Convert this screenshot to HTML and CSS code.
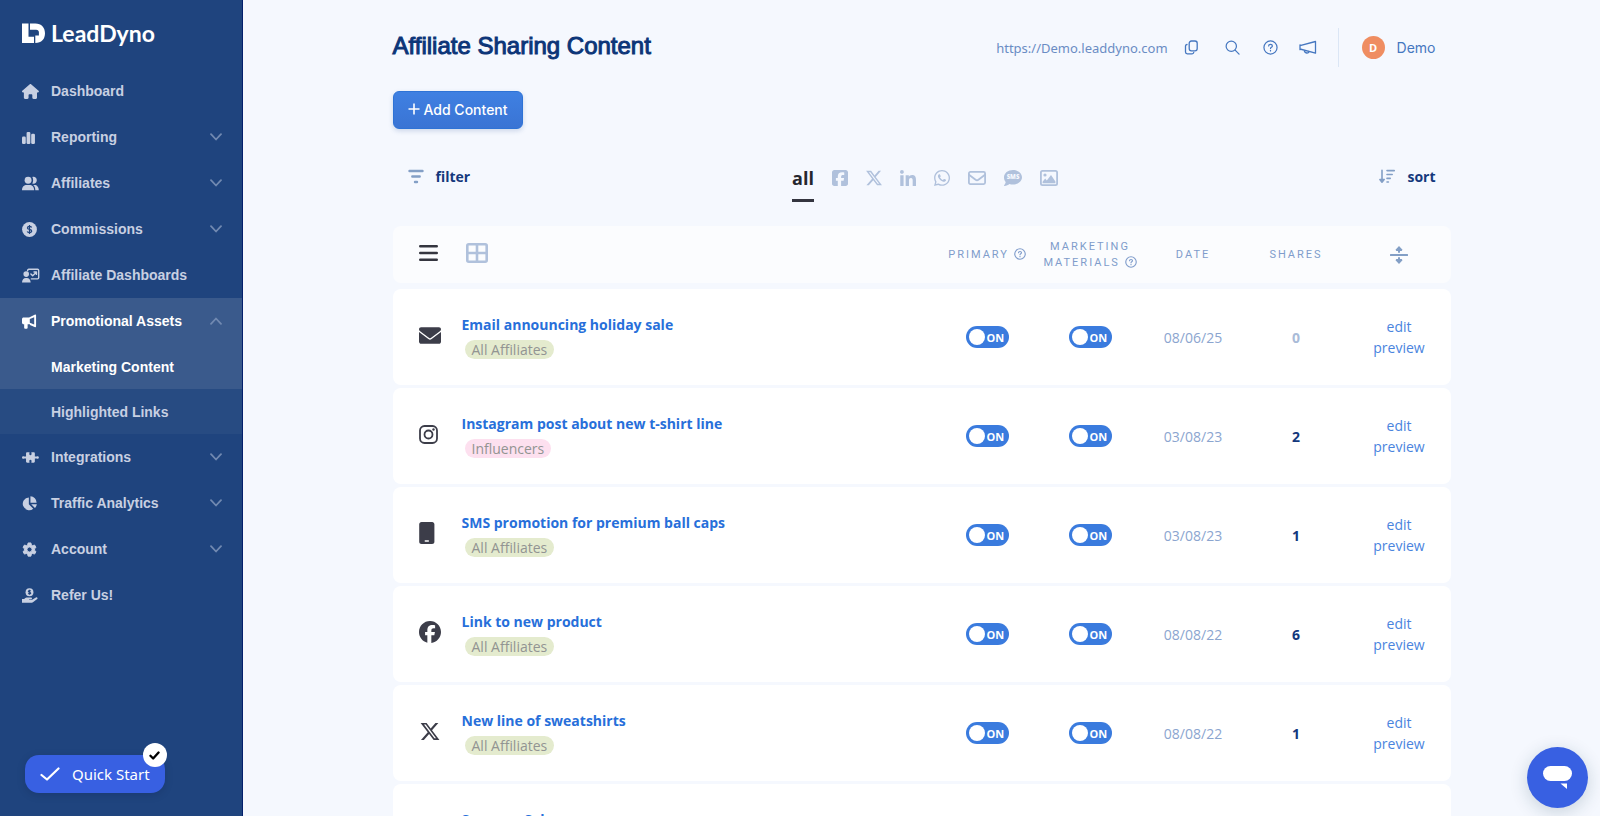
FILE: index.html
```html
<!DOCTYPE html>
<html lang="en">
<head>
<meta charset="utf-8">
<meta name="viewport" content="width=device-width, initial-scale=1">
<title>Affiliate Sharing Content</title>
<link rel="stylesheet" href="styles.css">
</head>
<body>
<svg class="sprite" aria-hidden="true">
  <symbol id="i-home" viewBox="0 0 576 512" preserveAspectRatio="xMinYMid"><path d="M575.8 255.5c0 18-15 32.1-32 32.1h-32l.7 160.2c0 2.7-.2 5.4-.5 8.1V472c0 22.1-17.9 40-40 40H392c-22.1 0-40-17.9-40-40V384c0-17.7-14.3-32-32-32H256c-17.7 0-32 14.3-32 32v88c0 22.1-17.9 40-40 40H104c-22.1 0-40-17.9-40-40V287.600H32c-18 0-32-14-32-32.100c0-9 3-17 10-24L266.400 8c7-7 15-8 22-8s15 2 21 7L564.800 231.500c8 7 12 15 11 24z"/></symbol>
  <symbol id="i-bars" viewBox="0 0 16 16" preserveAspectRatio="xMinYMid"><rect x="0" y="7" width="4" height="8" rx="1.300"/><rect x="4.900" y="2" width="4" height="13" rx="1.300"/><rect x="9.800" y="4" width="4" height="11" rx="1.300"/></symbol>
  <symbol id="i-users" viewBox="0 0 18 16" preserveAspectRatio="xMinYMid"><circle cx="6.500" cy="4.500" r="3.700"/><path d="M0 15.300c0-3.600 2.300-5.600 5-5.600h3c2.700 0 5 2 5 5.600zM11 1.100c2.500-.8 4.800.9 4.800 3.400S13.500 8.800 11 7.900c1.200-1.900 1.200-4.900 0-6.800zM12 9.700h1.600c2.300 0 4.300 2.200 4.300 5.600h-3.700c0-2.400-.7-4.200-2.200-5.600z"/></symbol>
  <symbol id="i-coin" viewBox="0 0 16 16" preserveAspectRatio="xMinYMid"><circle cx="8" cy="8" r="7.900"/><path class="cut" d="M10.300 5.800C9.800 4.900 9 4.700 8 4.700c-1.300 0-2.200.6-2.200 1.600 0 2.300 4.500 1 4.500 3.400 0 1-1 1.600-2.300 1.600-1.100 0-2-.3-2.500-1.200M8 3.300v9.400"/></symbol>
  <symbol id="i-teach" viewBox="0 0 19 16" preserveAspectRatio="xMinYMid"><circle cx="4.500" cy="6.500" r="3"/><path d="M0 15.500c0-3 1.700-4.900 4-4.900h1.200c2.300 0 4 1.900 4 4.900z"/><path class="ln" d="M6 3V2.600C6 1.900 6.500 1.400 7.200 1.400h9.400c.7 0 1.200.5 1.200 1.200v7.800c0 .7-.5 1.200-1.200 1.200H10M9.500 6.300l1.900 2 3.800-3.700M12.800 4.200h2.600v2.600"/></symbol>
  <symbol id="i-horn" viewBox="0 0 16 16" preserveAspectRatio="xMinYMid"><path fill-rule="evenodd" d="M14 .6c.5-.2 1 .1 1 .7v12c0 .6-.5.900-1 .7L8.500 11.800V11H6v3.600c0 .6-.4 1-1 1H3.300c-.6 0-1-.4-1-1V11H1.700C.8 11 0 10.300 0 9.400V5.300c0-.9.8-1.600 1.700-1.600H7.500zM13 3.400 8.300 5.400v4l4.700 1.900z"/></symbol>
  <symbol id="i-puzzle" viewBox="0 0 18 16" preserveAspectRatio="xMinYMid"><path d="M2.300 7h2V3.700c0-.7.500-1.200 1.200-1.200h2.200c.4 0 .5.400.3.800-.6 1.100 0 2.200 1 2.200s1.600-1.100 1-2.200c-.2-.4-.1-.8.3-.8h2.200c.7 0 1.200.5 1.200 1.200V7h2c.4-.7 2.300-.6 2.300 1s-1.900 1.700-2.300 1h-2v3.300c0 .7-.5 1.200-1.200 1.200h-2.200c-.4 0-.5-.4-.3-.8.6-1.100 0-2.200-1-2.200s-1.600 1.100-1 2.200c.2.400.1.800-.3.800H5.500c-.7 0-1.200-.5-1.200-1.200V9h-2C1.900 9.700 0 9.600 0 8s1.900-1.700 2.300-1z"/></symbol>
  <symbol id="i-pie" viewBox="0 0 16 16" preserveAspectRatio="xMinYMid"><path d="M7.300 1.500V8.700l4.700 4.800A6.800 6.800 0 1 1 7.300 1.500zM9 .3a6.900 6.900 0 0 1 6.600 6.900H9zM9.800 8.800h6c-.2 1.600-.9 3-2 4.100z"/></symbol>
  <symbol id="i-gear" viewBox="0 0 16 16" preserveAspectRatio="xMinYMid"><path fill-rule="evenodd" stroke="currentColor" stroke-linejoin="round" d="M6.500 1h3l.5 2.100 1.400.8 2-.7 1.500 2.600-1.500 1.400v1.700l1.500 1.400-1.500 2.600-2-.7-1.400.8-.5 2.100h-3L6 13l-1.400-.8-2 .7-1.500-2.600 1.500-1.400V7.200L1.100 5.800l1.500-2.600 2 .7L6 3.100zM8 5.300a2.700 2.700 0 1 0 0 5.400 2.700 2.700 0 0 0 0-5.400z"/></symbol>
  <symbol id="i-hand" viewBox="0 0 17 16" preserveAspectRatio="xMinYMid"><circle cx="8" cy="4.500" r="4.200"/><path d="M0 11.600h2.300c1.200-1 2.300-1.400 3.400-1.400h4c1.400 0 1.300 1.800 0 1.800H7.500v.6h3.300l4-2.500c1.300-.8 2.500.8 1.400 1.700L12 15c-.5.4-1 .6-1.700.6H0z"/><path class="cut" d="M9.300 3.300C8.800 2.700 6.800 2.600 6.800 3.700S9.400 4.600 9.300 5.600 7.200 6.300 6.700 5.700M8 1.900v5.200"/></symbol>
  <symbol id="i-down" viewBox="0 0 12 8"><path class="ln" d="M1 1.200l5 5.300 5-5.300"/></symbol>
  <symbol id="i-check" viewBox="0 0 20 14"><path class="ln" d="M1.500 8l5.500 4.500L18.500 1.500"/></symbol>
  <symbol id="i-tick" viewBox="0 0 12 10"><path class="ln" d="M1.500 5.300l3 3L10.500 1.700"/></symbol>
  <symbol id="i-copy" viewBox="0 0 14 15"><rect class="ln" x="4.700" y="1" width="8" height="9.800" rx="2.200"/><path class="ln" d="M2.500 4.500C1.500 4.600 1 5.200 1 6v6c0 1.100.8 1.800 1.800 1.800h4.800c1 0 1.600-.6 1.700-1.500"/></symbol>
  <symbol id="i-search" viewBox="0 0 16 16"><circle class="ln" cx="6.700" cy="6.700" r="5.500"/><path class="ln" d="M10.800 10.800 15 15"/></symbol>
  <symbol id="i-help" viewBox="0 0 16 16"><circle class="ln" cx="8" cy="8" r="7"/><path class="ln" d="M6 6.400C6 5.200 6.900 4.600 8 4.600s2 .6 2 1.700c0 1.400-2 1.400-2 2.700M8 11v.6"/></symbol>
  <symbol id="i-mega" viewBox="0 0 18 14"><path class="ln" d="M1 4.300v4.900M1 5.200 16.500 1v11.700L1 8.500M16.500 1v11.700M5.300 9.800c0 3.300 4.700 3.600 4.700.9"/></symbol>
  <symbol id="i-filter" viewBox="0 0 16 15"><path class="ln" d="M1.500 2h13M4.300 7.500h7.400M7 13h2"/></symbol>
  <symbol id="i-sort" viewBox="0 0 16 15"><path class="ln" d="M3 1.200v11M.9 10.500 3 13.200l2.100-2.700zM8 1.600h7.300M8 5.500h5.200M8 9.400h3.200M8 13h1.400"/></symbol>
  <symbol id="i-fbsq" viewBox="0 32 448 448"><path d="M64 32C28.700 32 0 60.700 0 96V416c0 35.300 28.700 64 64 64h98.200V334.200H109.400V256h52.800V222.300c0-87.100 39.400-127.500 125-127.500c16.200 0 44.200 3.200 55.700 6.400V172c-6-.6-16.500-1-29.600-1c-42 0-58.200 15.900-58.200 57.200V256h83.600l-14.400 78.200H255V480H384c35.300 0 64-28.700 64-64V96c0-35.300-28.700-64-64-64H64z"/></symbol>
  <symbol id="i-x" viewBox="24 24 464 464"><path d="M389.200 48h70.600L305.600 224.200 487 464H345L233.700 318.600 106.500 464H35.800L200.700 275.500 26.800 48H172.400L272.900 180.900 389.200 48zM364.400 421.800h39.100L151.100 88h-42L364.400 421.800z"/></symbol>
  <symbol id="i-in" viewBox="0 0 448 448"><path d="M100.280 448H7.400V148.900h92.880zM53.790 108.100C24.090 108.100 0 83.500 0 53.800a53.790 53.790 0 0 1 107.580 0c0 29.700-24.100 54.300-53.790 54.300zM447.900 448h-92.680V302.400c0-34.700-.7-79.200-48.290-79.200-48.290 0-55.690 37.700-55.690 76.700V448h-92.780V148.900h89.080v40.800h1.300c12.400-23.500 42.690-48.300 87.880-48.300 94 0 111.280 61.900 111.280 142.300V448z"/></symbol>
  <symbol id="i-wa" viewBox="0 32 448 448"><path d="M380.900 97.100C339 55.100 283.200 32 223.900 32c-122.400 0-222 99.600-222 222 0 39.100 10.200 77.300 29.600 111L0 480l117.700-30.900c32.400 17.700 68.900 27 106.100 27h.1c122.300 0 224.100-99.600 224.100-222 0-59.300-25.200-115-67.100-157zm-157 341.600c-33.200 0-65.700-8.900-94-25.700l-6.700-4-69.800 18.300L72 359.200l-4.400-7c-18.500-29.400-28.200-63.300-28.200-98.200 0-101.700 82.800-184.500 184.600-184.500 49.300 0 95.600 19.200 130.400 54.100 34.800 34.900 56.200 81.200 56.100 130.500 0 101.800-84.900 184.600-186.600 184.600zm101.200-138.200c-5.500-2.800-32.800-16.200-37.900-18-5.100-1.900-8.800-2.800-12.500 2.800-3.700 5.600-14.300 18-17.600 21.800-3.200 3.700-6.500 4.200-12 1.400-32.600-16.300-54-29.100-75.500-66-5.700-9.800 5.700-9.100 16.300-30.300 1.800-3.700.9-6.900-.5-9.700-1.400-2.800-12.500-30.100-17.100-41.200-4.500-10.800-9.100-9.300-12.500-9.500-3.200-.2-6.900-.2-10.600-.2-3.700 0-9.700 1.400-14.800 6.900-5.100 5.600-19.400 19-19.400 46.300 0 27.300 19.900 53.700 22.600 57.400 2.800 3.700 39.100 59.700 94.800 83.800 35.200 15.200 49 16.500 66.600 13.900 10.700-1.600 32.800-13.400 37.400-26.400 4.600-13 4.600-24.100 3.200-26.400-1.300-2.500-5-3.900-10.500-6.600z"/></symbol>
  <symbol id="i-mail" viewBox="0 0 18 16"><rect class="ln" x=".9" y="1.900" width="16.200" height="12.200" rx="1.500"/><path class="ln" d="M1 4.800l6.600 5c.8.600 2 .6 2.800 0l6.600-5"/></symbol>
  <symbol id="i-image" viewBox="0 0 18 16"><rect class="ln" x=".9" y=".9" width="16.200" height="14.200" rx="1.600"/><circle cx="5" cy="5" r="1.600"/><path d="M2.600 13.300v-1.500l2.600-3.200 1.600 1.800 4.200-5.300 4.400 6.300v1.900z"/></symbol>
  <symbol id="i-menu" viewBox="0 0 19 18"><path class="ln" d="M1.200 2.200h16.600M1.200 9h16.600M1.200 15.800h16.600"/></symbol>
  <symbol id="i-grid" viewBox="0 0 22 20"><rect class="ln" x="1.300" y="1.300" width="19.400" height="17.400" rx="1.500"/><path class="ln" d="M11 1.500v17M1.500 10h19"/></symbol>
  <symbol id="i-split" viewBox="0 0 18 18"><path d="M.8 8h16.400a1 1 0 0 1 0 2H.8a1 1 0 0 1 0-2zM9 0l3.500 3.800-.8 1.200H10v1.800H8V5H6.300l-.8-1.200zM9 18l3.500-3.800-.8-1.200H10v-1.800H8V13H6.300l-.8 1.200z"/></symbol>
  <symbol id="i-mailf" viewBox="0 64 512 384"><path d="M48 64C21.500 64 0 85.500 0 112c0 15.100 7.100 29.300 19.200 38.400L236.800 313.600c11.400 8.500 27 8.500 38.400 0L492.800 150.400c12.100-9.100 19.200-23.300 19.200-38.400c0-26.500-21.500-48-48-48H48zM0 176V400c0 26.500 28.700 48 48 48H464c26.500 0 48-21.500 48-48V176L294.400 339.200c-22.800 17.100-54 17.100-76.800 0L0 176z"/></symbol>
  <symbol id="i-insta" viewBox="0 0 19 19"><rect class="ln" x="1" y="1" width="17" height="17" rx="4.500"/><circle class="ln" cx="9.500" cy="9.500" r="4"/><circle cx="14.500" cy="4.500" r="1.200"/></symbol>
  <symbol id="i-phone" viewBox="0 0 16 22"><path fill-rule="evenodd" d="M2.500 0h10.600c1.300 0 2.300 1 2.300 2.300v17.400c0 1.300-1 2.300-2.300 2.300H2.500C1.200 22 .2 21 .2 19.700V2.300C.2 1 1.200 0 2.500 0zM6.300 18.200c-1 0-1 1.500 0 1.500h3c1 0 1-1.500 0-1.500z"/></symbol>
  <symbol id="i-fb" viewBox="0 0 512 512"><path d="M512 256C512 114.600 397.400 0 256 0S0 114.600 0 256C0 376 82.700 476.800 194.200 504.500V334.200H141.400V256h52.800V222.300c0-87.100 39.400-127.500 125-127.500c16.200 0 44.200 3.200 55.700 6.400V172c-6-.6-16.500-1-29.600-1c-42 0-58.200 15.900-58.200 57.200V256h83.600l-14.400 78.200H287V510.100C413.800 494.800 512 386.900 512 256z"/></symbol>
</svg>

<div class="app">
  <aside class="sidebar">
    <a class="logo" href="#">
      <svg class="logo-mark" viewBox="0 0 24 21"><path d="M0 .5h6.500v13.200H12v6.400H0zM8 .5h5.300C19.500.5 23 4.500 23 10.300s-3.500 9.800-9.700 9.800v-7.700h3.600V9.300c0-1.700-1-2.600-2.700-2.600H8z"/></svg>
      <span>LeadDyno</span>
    </a>
    <nav class="nav">
      <a class="nav-item" href="#"><svg class="nav-icon"><use href="#i-home"/></svg>Dashboard</a>
      <a class="nav-item" href="#"><svg class="nav-icon"><use href="#i-bars"/></svg>Reporting<svg class="chev"><use href="#i-down"/></svg></a>
      <a class="nav-item" href="#"><svg class="nav-icon"><use href="#i-users"/></svg>Affiliates<svg class="chev"><use href="#i-down"/></svg></a>
      <a class="nav-item" href="#"><svg class="nav-icon"><use href="#i-coin"/></svg>Commissions<svg class="chev"><use href="#i-down"/></svg></a>
      <a class="nav-item" href="#"><svg class="nav-icon"><use href="#i-teach"/></svg>Affiliate Dashboards</a>
      <a class="nav-item active" href="#"><svg class="nav-icon"><use href="#i-horn"/></svg>Promotional Assets<svg class="chev up"><use href="#i-down"/></svg></a>
      <a class="nav-item sub active" href="#">Marketing Content</a>
      <a class="nav-item sub" href="#">Highlighted Links</a>
      <a class="nav-item" href="#"><svg class="nav-icon"><use href="#i-puzzle"/></svg>Integrations<svg class="chev"><use href="#i-down"/></svg></a>
      <a class="nav-item" href="#"><svg class="nav-icon"><use href="#i-pie"/></svg>Traffic Analytics<svg class="chev"><use href="#i-down"/></svg></a>
      <a class="nav-item" href="#"><svg class="nav-icon"><use href="#i-gear"/></svg>Account<svg class="chev"><use href="#i-down"/></svg></a>
      <a class="nav-item" href="#"><svg class="nav-icon"><use href="#i-hand"/></svg>Refer Us!</a>
    </nav>
    <button class="quick" type="button">
      <svg class="quick-check"><use href="#i-check"/></svg>Quick Start
      <span class="quick-badge"><svg><use href="#i-tick"/></svg></span>
    </button>
  </aside>

  <main class="main">
    <div class="content">
      <header class="topbar">
        <h1>Affiliate Sharing Content</h1>
        <div class="tools">
          <a class="site-url" href="#">https://Demo.leaddyno.com</a>
          <button class="tool copy" type="button" aria-label="Copy link"><svg><use href="#i-copy"/></svg></button>
          <button class="tool search" type="button" aria-label="Search"><svg><use href="#i-search"/></svg></button>
          <button class="tool help" type="button" aria-label="Help"><svg><use href="#i-help"/></svg></button>
          <button class="tool mega" type="button" aria-label="Announcements"><svg><use href="#i-mega"/></svg></button>
          <a class="user" href="#"><span class="avatar">D</span>Demo</a>
        </div>
      </header>

      <button class="add" type="button"><svg viewBox="0 0 12 12"><path d="M6 .5v11M.5 6h11"/></svg>Add Content</button>

      <div class="controls">
        <button class="control" type="button"><svg><use href="#i-filter"/></svg>filter</button>
        <div class="tabs">
          <button class="tab selected" type="button">all</button>
          <button class="tab" type="button" aria-label="Facebook"><svg><use href="#i-fbsq"/></svg></button>
          <button class="tab" type="button" aria-label="X"><svg><use href="#i-x"/></svg></button>
          <button class="tab" type="button" aria-label="LinkedIn"><svg><use href="#i-in"/></svg></button>
          <button class="tab" type="button" aria-label="WhatsApp"><svg><use href="#i-wa"/></svg></button>
          <button class="tab wide" type="button" aria-label="Email"><svg><use href="#i-mail"/></svg></button>
          <button class="tab wide" type="button" aria-label="Text message"><svg viewBox="0 0 18 16"><path d="M9 0c5 0 9 3.200 9 7.200s-4 7.300-9 7.300c-1.300 0-2.500-.2-3.600-.6C4.300 14.800 2.500 15.900.4 15.900c-.5 0-.5-.4-.2-.7.600-.8 1.300-1.900 1.500-3.100C.6 10.800 0 9.100 0 7.200 0 3.200 4 0 9 0z"/><text x="9" y="9.300" text-anchor="middle" class="sms-text">SMS</text></svg></button>
          <button class="tab wide" type="button" aria-label="Image"><svg><use href="#i-image"/></svg></button>
        </div>
        <button class="control sort" type="button"><svg><use href="#i-sort"/></svg>sort</button>
      </div>

      <table class="list">
        <thead>
          <tr class="row head">
            <th class="views" colspan="2">
              <button class="view list-view" type="button" aria-label="List view"><svg><use href="#i-menu"/></svg></button>
              <button class="view grid-view" type="button" aria-label="Grid view"><svg><use href="#i-grid"/></svg></button>
            </th>
            <th>Primary <svg class="q"><use href="#i-help"/></svg></th>
            <th>Marketing<br>Materials <svg class="q"><use href="#i-help"/></svg></th>
            <th>Date</th>
            <th>Shares</th>
            <th><button class="view split" type="button" aria-label="Row height"><svg><use href="#i-split"/></svg></button></th>
          </tr>
        </thead>
        <tbody>
          <tr class="row">
            <td class="kind"><svg class="mailf"><use href="#i-mailf"/></svg></td>
            <td class="name"><a href="#">Email announcing holiday sale</a><span class="tag">All Affiliates</span></td>
            <td><label class="toggle"><input type="checkbox" checked><span>ON</span></label></td>
            <td><label class="toggle"><input type="checkbox" checked><span>ON</span></label></td>
            <td class="date">08/06/25</td>
            <td class="shares zero">0</td>
            <td class="actions"><a href="#">edit</a><a href="#">preview</a></td>
          </tr>
          <tr class="row">
            <td class="kind"><svg class="insta"><use href="#i-insta"/></svg></td>
            <td class="name"><a href="#">Instagram post about new t-shirt line</a><span class="tag pink">Influencers</span></td>
            <td><label class="toggle"><input type="checkbox" checked><span>ON</span></label></td>
            <td><label class="toggle"><input type="checkbox" checked><span>ON</span></label></td>
            <td class="date">03/08/23</td>
            <td class="shares">2</td>
            <td class="actions"><a href="#">edit</a><a href="#">preview</a></td>
          </tr>
          <tr class="row">
            <td class="kind"><svg class="phone"><use href="#i-phone"/></svg></td>
            <td class="name"><a href="#">SMS promotion for premium ball caps</a><span class="tag">All Affiliates</span></td>
            <td><label class="toggle"><input type="checkbox" checked><span>ON</span></label></td>
            <td><label class="toggle"><input type="checkbox" checked><span>ON</span></label></td>
            <td class="date">03/08/23</td>
            <td class="shares">1</td>
            <td class="actions"><a href="#">edit</a><a href="#">preview</a></td>
          </tr>
          <tr class="row">
            <td class="kind"><svg class="fb"><use href="#i-fb"/></svg></td>
            <td class="name"><a href="#">Link to new product</a><span class="tag">All Affiliates</span></td>
            <td><label class="toggle"><input type="checkbox" checked><span>ON</span></label></td>
            <td><label class="toggle"><input type="checkbox" checked><span>ON</span></label></td>
            <td class="date">08/08/22</td>
            <td class="shares">6</td>
            <td class="actions"><a href="#">edit</a><a href="#">preview</a></td>
          </tr>
          <tr class="row">
            <td class="kind"><svg class="x"><use href="#i-x"/></svg></td>
            <td class="name"><a href="#">New line of sweatshirts</a><span class="tag">All Affiliates</span></td>
            <td><label class="toggle"><input type="checkbox" checked><span>ON</span></label></td>
            <td><label class="toggle"><input type="checkbox" checked><span>ON</span></label></td>
            <td class="date">08/08/22</td>
            <td class="shares">1</td>
            <td class="actions"><a href="#">edit</a><a href="#">preview</a></td>
          </tr>
          <tr class="row">
            <td class="kind"></td>
            <td class="name"><a href="#">Summer Sale</a></td>
            <td></td><td></td><td></td><td></td><td></td>
          </tr>
        </tbody>
      </table>
    </div>
  </main>
  <button class="chat" type="button" aria-label="Open chat"><svg viewBox="0 0 30 24"><rect x="0" y="0" width="29" height="15" rx="7.500"/><path d="M17.500 17.500H24V23z"/></svg></button>
</div>
</body>
</html>
```
FILE: styles.css
```css
* { box-sizing: border-box; }

body {
  margin: 0;
  background: #f5f8fe;
  color: #3c3d49;
  font-family: "Open Sans", "Noto Sans", sans-serif;
  font-size: 15px;
}

a { color: inherit; text-decoration: none; }

button {
  margin: 0;
  padding: 0;
  border: 0;
  background: none;
  color: inherit;
  font: inherit;
  cursor: pointer;
}

svg { display: block; fill: currentColor; }

.sprite { position: absolute; width: 0; height: 0; }

.ln {
  fill: none;
  stroke: currentColor;
  stroke-width: var(--w, 1.5);
  stroke-linecap: round;
  stroke-linejoin: round;
}

.cut { fill: none; stroke: #1f447e; stroke-width: 1.3; }
.sms-text { font: 800 6px "Open Sans", sans-serif; fill: #f5f8fe; }

.app { display: flex; height: 100vh; overflow: hidden; }

/* Sidebar */
.sidebar {
  flex: none;
  display: flex;
  flex-direction: column;
  width: 243px;
  background: #1f447e;
  border-right: 1px solid #04206c;
  font-family: "Liberation Sans", Arial, sans-serif;
}

.logo {
  display: flex;
  align-items: center;
  gap: 5px;
  height: 68px;
  padding: 0 0 2px 22px;
  color: #fff;
  font: 700 23px/28px Lato, sans-serif;
}
.logo-mark { width: 24px; height: 21px; }

.nav-item {
  display: flex;
  align-items: center;
  height: 46px;
  padding: 0 20px 0 22px;
  color: #c8d0e2;
  font-size: 14px;
  font-weight: 700;
}
.nav-item.sub { height: 45px; padding-left: 51px; background: #274b82; }
.nav-item.active { color: #fff; background: #3a5a8c; }
.nav-icon { width: 18px; height: 15px; margin-right: 11px; }
.chev { width: 12px; height: 8px; margin-left: auto; color: #7189b1; --w: 1.8; }
.chev.up { transform: rotate(180deg); }

.quick {
  position: relative;
  display: flex;
  align-items: center;
  align-self: flex-start;
  gap: 12px;
  height: 38px;
  margin: auto 0 23px 25px;
  padding: 0 15px 0 15px;
  border-radius: 14px;
  background: #3860e2;
  box-shadow: 0 2px 8px rgba(0, 0, 40, .15);
  color: #fff;
  font: 15px "Noto Sans", sans-serif;
}
.quick-check { width: 20px; height: 14px; --w: 2.2; }
.quick-badge {
  position: absolute;
  top: -12px;
  right: -2px;
  display: grid;
  place-items: center;
  width: 24px;
  height: 24px;
  border-radius: 50%;
  background: #fff;
  color: #000;
  --w: 2.6;
}
.quick-badge svg { width: 11px; height: 9px; }

/* Main */
.main { flex: 1; min-width: 0; overflow-y: auto; scrollbar-width: none; }
.content { max-width: 1058px; margin: 0 auto; }

.topbar {
  display: flex;
  align-items: flex-start;
  justify-content: space-between;
  height: 91px;
  padding: 28px 15px 0 0;
}
h1 {
  margin: 0;
  color: #0c3578;
  font: 400 24px/36px "Liberation Sans", Arial, sans-serif;
  -webkit-text-stroke: 1px #0c3578;
}
.tools { display: flex; align-items: center; color: #4577c0; }
.site-url { color: #6a8cc4; font: 13px "Noto Sans", sans-serif; }
.tool { --w: 1.3; }
.tool svg { width: 15px; height: 15px; }
.copy { margin-left: 16px; }
.search { margin-left: 26px; }
.help { margin-left: 23px; }
.mega { margin-left: 21px; }
.mega svg { width: 18px; }
.user {
  display: flex;
  align-items: center;
  gap: 12px;
  height: 39px;
  margin-left: 21px;
  padding-left: 23px;
  border-left: 1px solid #dbe6f5;
  font: 14px Inter, sans-serif;
}
.avatar {
  display: grid;
  place-items: center;
  width: 23px;
  height: 23px;
  border-radius: 50%;
  background: #ef8d61;
  color: #fff;
  font: 700 11px "Open Sans", sans-serif;
}

.add {
  display: flex;
  align-items: center;
  gap: 4px;
  height: 38px;
  padding: 0 14px 2px;
  border: 1px solid #2e73d6;
  border-radius: 6px;
  background: linear-gradient(#3f80e2, #3a74d4);
  box-shadow: 0 2px 5px rgba(40, 80, 150, .2);
  color: #fff;
  font: 500 14px Inter, sans-serif;
}
.add svg { width: 12px; height: 12px; stroke: #fff; stroke-width: 1.6; }

.controls {
  display: grid;
  grid-template-columns: 1fr auto 1fr;
  align-items: start;
  padding: 36px 15px 24px;
}
.control {
  display: flex;
  align-items: center;
  justify-self: start;
  gap: 12px;
  height: 22px;
  color: #14387c;
  font-weight: 700;
  font-size: 14px;
}
.control svg { width: 16px; height: 15px; color: #839fc6; --w: 2.4; }
.sort { justify-self: end; }
.sort svg { --w: 1.6; }
.tabs { display: flex; gap: 18px; padding-left: 7px; color: #b0c1dc; }
.tab { height: 37px; padding-bottom: 12px; --w: 1.8; }
.tab svg { width: 16px; height: 16px; }
.tab.wide svg { width: 18px; }
.tab.selected {
  padding-bottom: 8px;
  border-bottom: 3px solid #34353f;
  color: #25262e;
  font-size: 18px;
  font-weight: 700;
  line-height: 24px;
}

/* Content list */
.list { display: block; width: 100%; }
.list thead { display: block; margin-bottom: 6px; }
.list tbody { display: grid; gap: 3px; padding-bottom: 24px; }
.row {
  display: grid;
  grid-template-columns: 69px minmax(0, 1fr) repeat(5, 103px);
  align-items: center;
  min-height: 96px;
  border-radius: 8px;
  background: #fff;
  text-align: center;
}
.row td, .row th { padding: 0; }
.head { min-height: 57px; background: #fbfcfe; color: #7f9ccb; }
.head th {
  font: 400 11px/16px Roboto, sans-serif;
  letter-spacing: 2px;
  text-transform: uppercase;
}
.row .views { grid-column: span 2; display: flex; align-items: center; padding: 0 0 4px 26px; }
.list-view svg { width: 19px; height: 18px; color: #34353f; --w: 2.4; }
.grid-view { margin-left: 28px; }
.grid-view svg { width: 22px; height: 20px; color: #b0c1dc; --w: 2.6; }
.split { vertical-align: middle; }
.split svg { width: 18px; height: 18px; color: #839fc6; }
.q { display: inline-block; width: 12px; height: 12px; vertical-align: -2px; --w: 1.5; }

.row .kind { padding: 0 0 4px 26px; }
.mailf { width: 22px; height: 17px; }
.insta { width: 19px; height: 19px; --w: 1.8; }
.phone { width: 16px; height: 22px; }
.fb { width: 22px; height: 22px; }
.x { width: 22px; height: 19px; }

.name { align-self: start; text-align: left; }
.row .name { padding-top: 24px; }
.name a { display: block; color: #276fda; font-weight: 700; font-size: 14px; line-height: 24px; }
.tag {
  display: inline-block;
  margin: 3px 0 0 3px;
  padding: 0 7px;
  border-radius: 10px;
  background: #e4ebce;
  color: #929492;
  font-size: 14px;
  line-height: 19px;
}
.tag.pink { background: #fde0ef; }

.toggle {
  display: inline-flex;
  align-items: center;
  gap: 2px;
  width: 43px;
  height: 22px;
  padding-left: 3px;
  border-radius: 11px;
  background: #3a7bde;
  color: #fff;
  font-size: 11px;
  font-weight: 700;
  vertical-align: middle;
}
.toggle input {
  appearance: none;
  width: 16px;
  height: 16px;
  margin: 0;
  border-radius: 50%;
  background: #fff;
}

.date { color: #8ba5cf; font-size: 14px; }
.shares { color: #14387c; font-weight: 700; font-size: 14px; }
.shares.zero { color: #a9bbd8; }
.actions a { display: block; color: #4a84de; font-size: 14px; line-height: 21px; }

.chat {
  position: fixed;
  right: 12px;
  bottom: 8px;
  display: grid;
  place-items: center;
  width: 61px;
  height: 61px;
  border-radius: 50%;
  background: #3860e2;
  box-shadow: 0 4px 18px rgba(20, 60, 80, .2);
  color: #fff;
}
.chat svg { width: 30px; height: 24px; }
```
